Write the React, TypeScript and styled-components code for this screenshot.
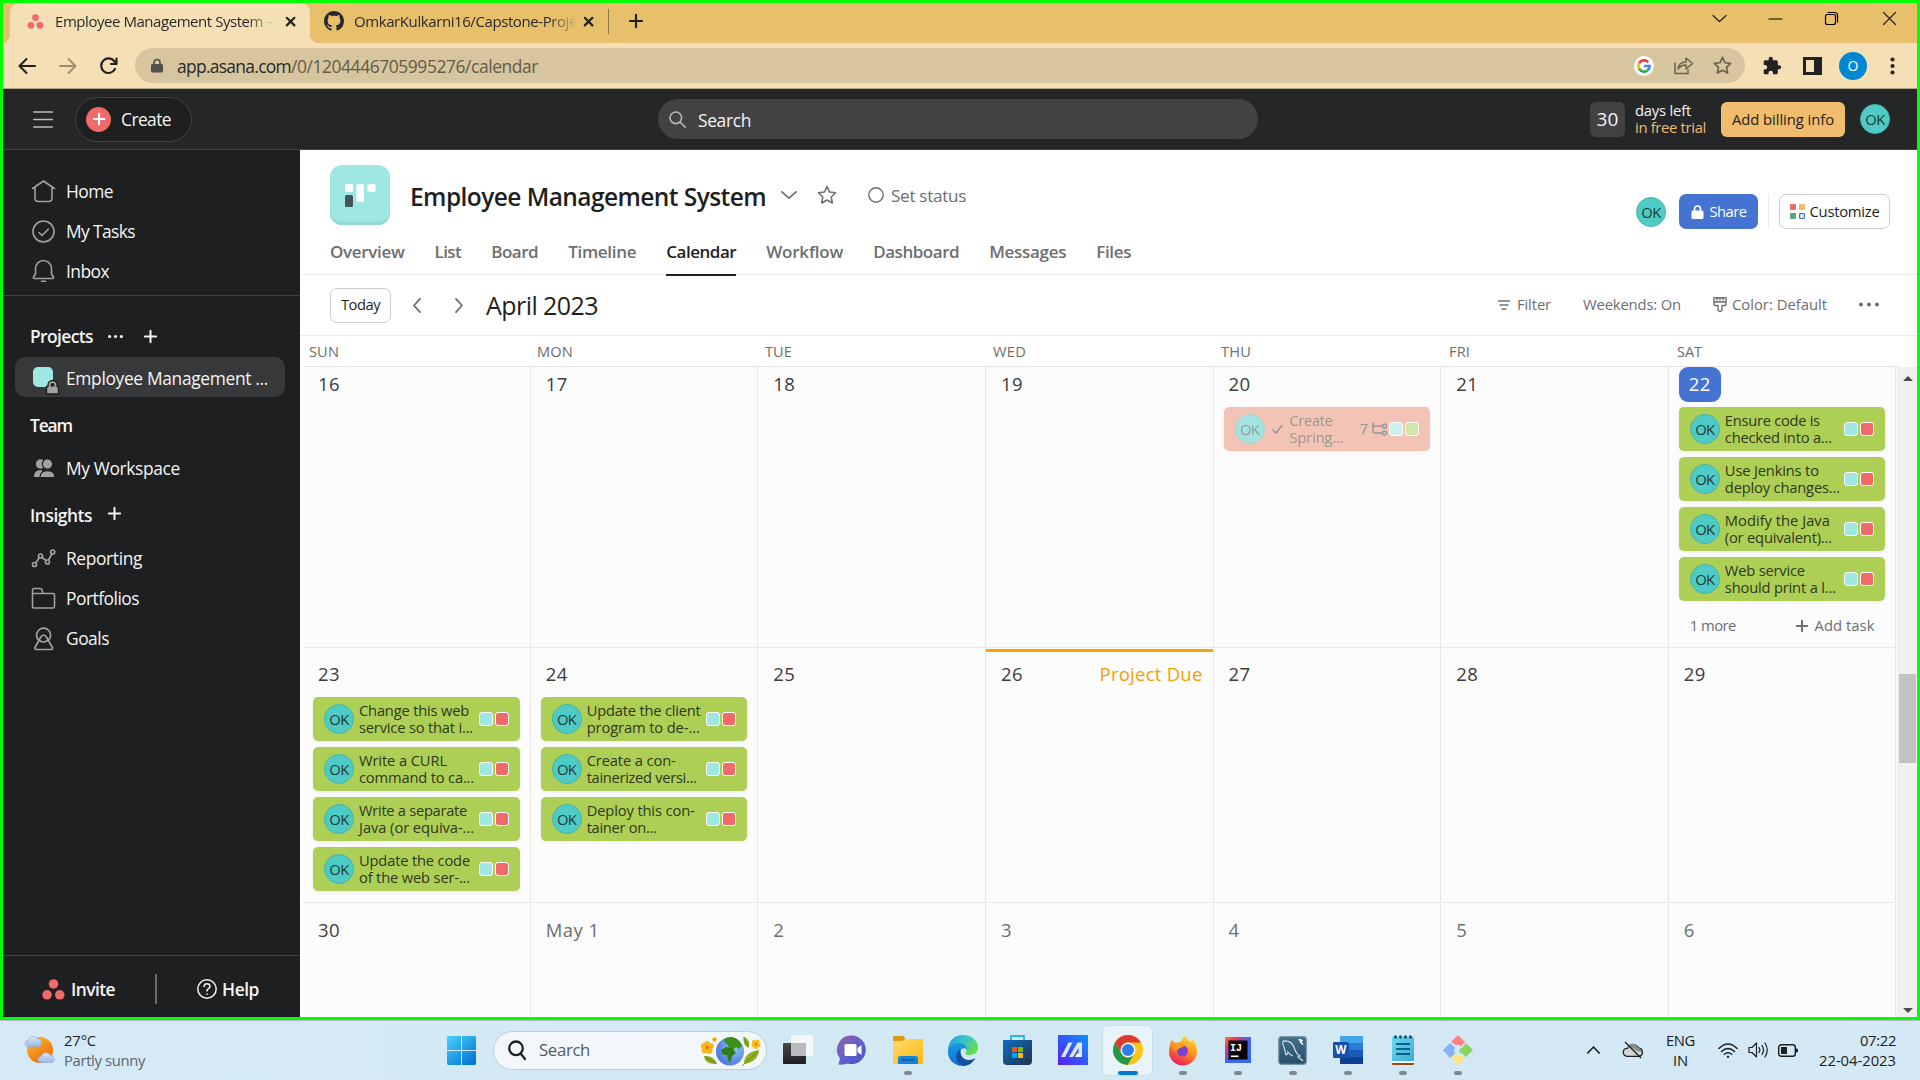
import React, { useLayoutEffect, useRef, useState } from "react";
import styled, { createGlobalStyle } from "styled-components";

const Global = createGlobalStyle`
  * { box-sizing: border-box; }
  body { margin: 0; overflow: hidden; background: #d3e8f4; font-family: "Open Sans", "Noto Sans", sans-serif; }
  svg { display: block; flex: none; overflow: visible; }
`;

const Line = styled.span<{ $size: number; $weight?: number; $color?: string; $lh?: number; $drop?: number }>`
  display: inline-block;
  flex: none;
  white-space: nowrap;
  font-size: ${(p) => p.$size}px;
  font-weight: ${(p) => p.$weight ?? 400};
  color: ${(p) => p.$color ?? "inherit"};
  line-height: ${(p) => (p.$lh ? `${p.$lh}px` : "1.3")};
  padding-top: ${(p) => p.$drop ?? 0}px;
`;

type TextProps = { children: string; size: number; w?: number; weight?: number; color?: string; lh?: number; drop?: number };

/* A single line of text, tracked so that it fills the measure `w`. */
function Text({ children, size, w, weight, color, lh, drop }: TextProps) {
  const ref = useRef<HTMLSpanElement>(null);
  const [track, setTrack] = useState(0);
  useLayoutEffect(() => {
    if (ref.current && w) {
      const natural = ref.current.getBoundingClientRect().width;
      setTrack((w - natural) / children.length);
    }
  }, []);
  return (
    <Line ref={ref} $size={size} $weight={weight} $color={color} $lh={lh} $drop={drop} style={{ letterSpacing: track }}>
      {children}
    </Line>
  );
}

const Screen = styled.div`
  width: 1920px; height: 1080px; display: flex; flex-direction: column; overflow: hidden;
`;
const BrowserWindow = styled.div`
  height: 1020px; border: 3px solid #00ff00; display: flex; flex-direction: column; background: #fff;
`;

/* ---------- browser chrome ---------- */
const TabStrip = styled.div`
  height: 40px; flex: none; background: #e8c06b; display: flex; align-items: stretch; padding-left: 7px;
`;
const BrowserTab = styled.div<{ $active?: boolean; $width: number; $pad: number }>`
  width: ${(p) => p.$width}px; padding-left: ${(p) => p.$pad}px; padding-bottom: 4px;
  background: ${(p) => (p.$active ? "#f5e0b6" : "transparent")};
  border-radius: 9px 9px 0 0; display: flex; align-items: center; position: relative; color: #2a2a2a;
  ${(p) => p.$active && `
    &::before, &::after { content: ""; position: absolute; bottom: 0; width: 9px; height: 9px; }
    &::before { left: -9px; background: radial-gradient(circle at 0 0, transparent 9px, #f5e0b6 9.5px); }
    &::after { right: -9px; background: radial-gradient(circle at 100% 0, transparent 9px, #f5e0b6 9.5px); }
  `}
`;
const TabTitle = styled.div<{ $width: number; $gap: number }>`
  width: ${(p) => p.$width}px; margin-left: ${(p) => p.$gap}px; overflow: hidden; white-space: nowrap;
  mask-image: linear-gradient(90deg, #000 88%, transparent 101%);
`;
const TabEnd = styled.div`
  display: flex; align-items: center; padding-bottom: 4px; gap: 20px;
  &::before { content: ""; width: 1px; height: 25px; background: #8d7748; }
`;
const WinControls = styled.div`
  margin-left: auto; width: 225px; display: grid; grid-template-columns: 54px 58px 55px 61px;
  justify-items: center; align-items: center; padding-bottom: 9px;
`;
const Toolbar = styled.div`
  height: 46px; flex: none; background: #f5e0b6; border-bottom: 1px solid #b3a684; display: flex; align-items: center;
  padding-left: 15px;
`;
const NavButtons = styled.div`display: flex; width: 117px; gap: 22.5px; align-items: center;`;
const Omnibox = styled.div`
  width: 1610px; height: 35px; border-radius: 18px; background: #d6c59f; display: flex; align-items: center; padding: 0 13px 0 16px;
`;
const UrlText = styled.div`margin-left: 14px; display: flex; color: #655b47;`;
const OmniActions = styled.div`margin-left: auto; display: flex; align-items: center; gap: 20px;`;
const BrowserActions = styled.div`display: flex; align-items: center; margin-left: 17px;`;
const ProfileDot = styled.div`
  width: 28px; height: 28px; border-radius: 50%; background: #0288d1; color: #fff; margin: 0 23px 0 17px;
  display: flex; align-items: center; justify-content: center; font-size: 14px;
`;

/* ---------- application top bar ---------- */
const TopBar = styled.header`
  height: 61px; flex: none; background: #252628; border-bottom: 1px solid #424244; display: flex; align-items: center; color: #f5f4f3;
`;
const TopLeft = styled.div`width: 655px; display: flex; align-items: center; padding-left: 30px;`;
const CreateButton = styled.button`
  margin-left: 22px; width: 117px; height: 45px; border-radius: 23px; border: 1px solid #424244; background: #1e1f21; color: #f5f4f3;
  display: flex; align-items: center; padding: 0 0 0 10px; gap: 10px; font-family: inherit;
`;
const PlusDisc = styled.span`
  width: 25px; height: 25px; border-radius: 50%; background: #f06a6a; display: flex; align-items: center; justify-content: center; flex: none;
`;
const SearchField = styled.div`
  width: 600px; height: 40px; border-radius: 20px; background: #424244; display: flex; align-items: center; gap: 12px; padding-left: 11px;
`;
const TopRight = styled.div`flex: 1; display: flex; align-items: center; padding-left: 332px;`;
const DaysBox = styled.div`
  width: 35px; height: 35px; border-radius: 6px; background: #424244; display: flex; align-items: center; justify-content: center; margin-right: 10px;
`;
const TrialText = styled.div`width: 86px; display: flex; flex-direction: column; align-items: flex-start;`;
const BillingButton = styled.button`
  width: 124px; height: 35px; border: 0; border-radius: 6px; background: #f1bd6c; color: #1e1f21; font-family: inherit; margin-right: 15px;
  display: flex; align-items: center; justify-content: center; padding: 0;
`;
const Avatar = styled.span`
  width: 30px; height: 30px; border-radius: 50%; background: #4ecbc4; border: 1px solid #45b3ac; color: #1e3c3b; flex: none;
  display: flex; align-items: center; justify-content: center; font-size: 14.8px; letter-spacing: -0.6px;
`;

/* ---------- sidebar ---------- */
const Body = styled.div`flex: 1; min-height: 0; display: flex;`;
const Sidebar = styled.nav`
  width: 297px; flex: none; background: #1e1f21; color: #f5f4f3; display: flex; flex-direction: column;
`;
const NavGroup = styled.div<{ $top?: number; $height: number; $line?: boolean }>`
  height: ${(p) => p.$height}px; padding-top: ${(p) => p.$top ?? 0}px;
  border-bottom: ${(p) => (p.$line ? "1px solid #424244" : "0")};
`;
const NavItem = styled.a<{ $selected?: boolean }>`
  height: 40px; margin: 0 15px 0 12px; border-radius: 10px; padding-left: 16px; display: flex; align-items: center; gap: 10px;
  background: ${(p) => (p.$selected ? "#37383a" : "transparent")}; color: #f5f4f3;
  > svg { width: 25px; height: 25px; }
`;
const SectionTitle = styled.div<{ $height: number }>`
  height: ${(p) => p.$height}px; padding-left: 27px; display: flex; align-items: center;
`;
const SectionIcons = styled.span<{ $left: number }>`display: flex; align-items: center; gap: 21px; margin-left: ${(p) => p.$left}px;`;
const SidebarFoot = styled.div`
  margin-top: auto; height: 62px; border-top: 1px solid #424244; display: flex; align-items: center; padding: 5px 0 0 39px;
`;
const FootItem = styled.div<{ $width: number; $gap: number }>`display: flex; align-items: center; gap: ${(p) => p.$gap}px; width: ${(p) => p.$width}px;`;
const FootRule = styled.div`width: 2px; height: 30px; background: #6a6b6d; margin-right: 40px;`;

/* ---------- project header ---------- */
const Main = styled.main`flex: 1; display: flex; flex-direction: column; background: #fff; min-width: 0; color: #1e1f21;`;
const ProjectHead = styled.div`height: 125px; flex: none; border-bottom: 1px solid #edeae9; display: flex; justify-content: space-between;`;
const ProjectTitleArea = styled.div`padding-left: 30px;`;
const TitleRow = styled.div`height: 75px; padding-top: 15px; display: flex; align-items: center;`;
const ProjectTile = styled.div`
  width: 60px; height: 60px; border-radius: 12px; background: #9ee7e3; box-shadow: inset 0 -3px 0 #93dad6; padding: 18px 15px; margin-right: 20px;
`;
const TitleExtras = styled.div`display: flex; align-items: center; margin-left: 15px;`;
const StatusPill = styled.div`display: flex; align-items: center; gap: 7px; margin-left: 31px; color: #6d6e6f;`;
const ViewTabs = styled.div`display: flex; height: 51px; position: relative;`;
const ViewTab = styled.a<{ $active?: boolean; $width: number }>`
  width: ${(p) => p.$width}px; height: 51px; margin-right: 30px; padding-top: 16px; display: block;
  color: ${(p) => (p.$active ? "#1e1f21" : "#6d6e6f")};
  border-bottom: ${(p) => (p.$active ? "2px solid #1e1f21" : "0")};
`;
const HeadActions = styled.div`height: 35px; margin-top: 44px; display: flex; align-items: center; padding-right: 27px;`;
const ShareButton = styled.button`
  width: 79px; height: 35px; border: 0; border-radius: 7px; background: #4573d2; color: #fff; margin: 0 10px 0 13px; padding: 0; font-family: inherit;
  display: flex; align-items: center; justify-content: center; gap: 6px;
`;
const ActionRule = styled.div`width: 1px; height: 35px; background: #edeae9; margin-right: 10px;`;
const OutlineButton = styled.button<{ $width: number }>`
  width: ${(p) => p.$width}px; height: 35px; border: 1px solid #cfcbcb; border-radius: 7px; background: #fff; color: #1e1f21; padding: 0; font-family: inherit;
  display: flex; align-items: center; justify-content: center; gap: 5px;
`;
const CalendarBar = styled.div`
  height: 61px; flex: none; border-bottom: 1px solid #edeae9; display: flex; align-items: center; padding: 0 38px 0 30px;
`;
const MonthArrows = styled.div`display: flex; width: 95px; padding-left: 22px; gap: 34px;`;
const BarTools = styled.div`margin-left: auto; display: flex; align-items: center; color: #6d6e6f;`;
const BarTool = styled.div<{ $gap: number; $after: number }>`display: flex; align-items: center; gap: ${(p) => p.$gap}px; margin-right: ${(p) => p.$after}px;`;

/* ---------- calendar ---------- */
const WeekdayRow = styled.div`
  height: 31px; flex: none; display: grid; grid-template-columns: repeat(7, 228px); margin: 0 18px 0 3px; align-items: center; color: #6d6e6f;
  border-bottom: 1px solid #e6e3e2; padding-bottom: 1px;
  > span { padding-left: 6px; }
`;
const CalendarArea = styled.div`flex: 1; min-height: 0; display: flex; padding-left: 3px;`;
const Weeks = styled.div`width: 1593.5px; background: #fcfcfc; display: flex; flex-direction: column; overflow: hidden;`;
const Week = styled.div<{ $height: number }>`
  height: ${(p) => p.$height}px; flex: none; display: grid; grid-template-columns: repeat(7, 1fr); border-bottom: 1px solid #eae7e6;
`;
const Day = styled.div<{ $top: number; $due?: boolean }>`
  border-right: 1px solid #e8e5e4; padding: ${(p) => p.$top}px 10px 0 10px; min-width: 0; display: flex; flex-direction: column;
  box-shadow: ${(p) => (p.$due ? "inset 0 3px 0 #fca401" : "none")}; margin-top: ${(p) => (p.$top ? 1 : 0)}px;
`;
const DayHead = styled.div`height: 35px; flex: none; display: flex; justify-content: space-between; align-items: center; padding-left: 5px; margin-bottom: 5px;`;
const TodayBadge = styled.div`
  width: 42px; height: 35px; border-radius: 9px; background: #4573d2; color: #fff; display: flex; align-items: center; justify-content: center; margin-left: -5px;
`;
const Card = styled.div<{ $done?: boolean }>`
  height: 44px; flex: none; margin-bottom: 6px; border-radius: 5px; display: flex; align-items: center; padding: 0 11px;
  background: ${(p) => (p.$done ? "#ec8d71" : "#aecf55")}; box-shadow: 0 1px 3px rgba(109, 110, 111, 0.12);
  opacity: ${(p) => (p.$done ? 0.5 : 1)};
`;
const CardText = styled.div<{ $gap?: number }>`
  margin-left: ${(p) => p.$gap ?? 5}px; display: flex; flex-direction: column; align-items: flex-start; color: #2f3920; flex: 1; min-width: 0; padding-bottom: 1px;
`;
const Swatches = styled.div<{ $gap?: number }>`display: flex; gap: 2px; margin-left: ${(p) => p.$gap ?? 0}px;`;
const Swatch = styled.i<{ $color: string }>`
  width: 14px; height: 14px; border-radius: 3px; border: 1px solid #fff; background: ${(p) => p.$color};
`;
const DayFoot = styled.div`display: flex; justify-content: space-between; padding: 9px 11px 0; color: #6d6e6f;`;
const AddTask = styled.span`display: flex; align-items: center; gap: 6px;`;
const ScrollTrack = styled.div`
  flex: 1; background: #f0f0f0; display: flex; flex-direction: column; align-items: center; padding: 9px 0 4px 2px;
`;
const ScrollThumb = styled.div`width: 17px; height: 89px; background: #c2c2c2; margin: 293px 0 auto;`;

/* ---------- taskbar ---------- */
const Taskbar = styled.footer`
  height: 60px; border-top: 1px solid #b5b8cc; background: linear-gradient(90deg, #d5eaf6, #d2e8f3 50%, #d4e8f5); display: flex; align-items: center; color: #1d1f21; padding-bottom: 1px;
`;
const Weather = styled.div`width: 447px; padding-left: 25px; display: flex; align-items: center; gap: 9px;`;
const TwoLines = styled.div<{ $align: string }>`display: flex; flex-direction: column; align-items: ${(p) => p.$align};`;
const TaskSearch = styled.div`
  width: 274px; height: 39px; margin: 0 3px 0 17px; border-radius: 20px; background: #f2f7fb; border: 1px solid #b9cfdd; display: flex; align-items: center; padding: 0 5px 0 14px; gap: 13px;
  > :last-child { margin-left: auto; }
`;
const AppSlot = styled.div<{ $active?: boolean }>`
  width: 49px; height: 49px; margin-right: 6px; border-radius: 5px; display: flex; align-items: center; justify-content: center; position: relative;
  background: ${(p) => (p.$active ? "#e9f3fa" : "transparent")}; box-shadow: ${(p) => (p.$active ? "0 0 0 1px #c9dde9" : "none")};
`;
const RunMark = styled.i<{ $active?: boolean }>`
  position: absolute; bottom: 0; left: 50%; width: ${(p) => (p.$active ? 20 : 8)}px; height: 4px; border-radius: 2px; transform: translateX(-50%);
  background: ${(p) => (p.$active ? "#0078d4" : "#7e8a91")};
`;
const Tray = styled.div`margin-left: auto; display: flex; align-items: center; padding-right: 24px;`;
const TrayGap = styled.span<{ $w: number }>`width: ${(p) => p.$w}px; flex: none;`;

/* ---------- icons ---------- */
const Stroke = ({ w, h, d, s = 1.5, c = "currentColor", vb }: { w: number; h: number; d: string; s?: number; c?: string; vb?: string }) => (
  <svg width={w} height={h} viewBox={vb ?? `0 0 ${w} ${h}`} fill="none" stroke={c} strokeWidth={s} strokeLinecap="round" strokeLinejoin="round"><path d={d} /></svg>
);
const AsanaMark = ({ w, h }: { w: number; h: number }) => (
  <svg width={w} height={h} viewBox="0 0 24 22" fill="#f06a6a"><circle cx="12" cy="5.2" r="5" /><circle cx="5.2" cy="16.6" r="5" /><circle cx="18.6" cy="16.6" r="5" /></svg>
);
const Plus = ({ n, s = 2, c = "currentColor" }: { n: number; s?: number; c?: string }) => <Stroke w={n} h={n} vb="0 0 12 12" s={s * 12 / n} c={c} d="M6 .8v10.4M.8 6h10.4" />;
const Cross = () => <Stroke w={9} h={9} s={2.2} c="#222" d="M.8.8l7.6 7.6M8.4.8L.8 8.4" />;
const STAR = "M10 1.5l2.6 5.6 6 .7-4.4 4.2 1.2 6L10 15l-5.4 3 1.2-6L1.4 7.8l6-.7z";
const Dots = ({ w, r, c }: { w: number; r: number; c: string }) => (
  <svg width={w} height={5} fill={c}><circle cx={r} cy="2.5" r={r} /><circle cx={w / 2} cy="2.5" r={r} /><circle cx={w - r} cy="2.5" r={r} /></svg>
);
const GithubMark = () => (
  <svg width="20" height="20" viewBox="0 0 16 16" fill="#24292f"><path d="M8 0C3.58 0 0 3.58 0 8c0 3.54 2.29 6.53 5.47 7.59.4.07.55-.17.55-.38 0-.19-.01-.82-.01-1.49-2.01.37-2.53-.49-2.69-.94-.09-.23-.48-.94-.82-1.13-.28-.15-.68-.52-.01-.53.63-.01 1.08.58 1.23.82.72 1.21 1.87.87 2.33.66.07-.52.28-.87.51-1.07-1.78-.2-3.64-.89-3.64-3.95 0-.87.31-1.59.82-2.15-.08-.2-.36-1.02.08-2.12 0 0 .67-.21 2.2.82.64-.18 1.32-.27 2-.27s1.36.09 2 .27c1.53-1.04 2.2-.82 2.2-.82.44 1.1.16 1.92.08 2.12.51.56.82 1.27.82 2.15 0 3.07-1.87 3.75-3.65 3.95.29.25.54.73.54 1.48 0 1.07-.01 1.93-.01 2.2 0 .21.15.46.55.38A8.01 8.01 0 0016 8c0-4.42-3.58-8-8-8z" /></svg>
);
const Lock = ({ w, h, c }: { w: number; h: number; c: string }) => (
  <svg width={w} height={h} viewBox="0 0 12 14"><rect x="0" y="5.5" width="12" height="8.5" rx="1.5" fill={c} /><path d="M3 6V4a3 3 0 016 0v2" fill="none" stroke={c} strokeWidth="1.7" /></svg>
);
const GoogleMark = () => (
  <svg width="20" height="20" viewBox="0 0 20 20" fill="none" strokeWidth="2.7"><circle cx="10" cy="10" r="10" fill="#fff" /><path d="M14.2 6.3A5.6 5.6 0 005.1 7.3" stroke="#ea4335" /><path d="M5.1 7.3a5.6 5.6 0 000 5.4" stroke="#fbbc05" /><path d="M5.1 12.7a5.6 5.6 0 008.4 1.7" stroke="#34a853" /><path d="M13.5 14.4A5.5 5.5 0 0015.600 10H10" stroke="#4285f4" /></svg>
);
const WeatherIcon = () => (
  <svg width="30" height="30" viewBox="0 0 30 30">
    <defs><linearGradient id="sun" x1="0" y1="0" x2=".7" y2="1"><stop offset="0" stopColor="#f7c02e" /><stop offset="1" stopColor="#f06a0c" /></linearGradient>
      <linearGradient id="cloud" x1="0" y1="0" x2="0" y2="1"><stop offset="0" stopColor="#dbe5f8" /><stop offset="1" stopColor="#9db8e8" /></linearGradient></defs>
    <circle cx="15" cy="15" r="13" fill="url(#sun)" />
    <path d="M3 11.500a3 3 0 010-6 5.500 5.500 0 0110-1.500 4 4 0 011.500 7.500z" fill="url(#cloud)" stroke="#8faae0" strokeWidth=".6" />
    <path d="M16 27.500a3 3 0 010-6 5.500 5.500 0 0110-1 3.600 3.600 0 011 7z" fill="url(#cloud)" stroke="#8faae0" strokeWidth=".6" />
  </svg>
);
const WindowsIcon = () => (
  <svg width="29" height="29" viewBox="0 0 29 29"><defs><linearGradient id="win" gradientUnits="userSpaceOnUse" x1="0" y1="0" x2="24" y2="29"><stop offset="0" stopColor="#4cd0fb" /><stop offset="1" stopColor="#0377d4" /></linearGradient></defs>
    <path d="M1 0h13v14H0V1zM15 0h13l1 1v13H15zM0 15h14v14H1l-1-1zM15 15h14v13l-1 1H15z" fill="url(#win)" /></svg>
);
const EarthDecor = () => (
  <svg width="60" height="31" viewBox="0 0 60 31">
    <defs><radialGradient id="sea" cx=".65" cy=".35" r=".8"><stop offset="0" stopColor="#8cc8f5" /><stop offset="1" stopColor="#4468d8" /></radialGradient></defs>
    <g fill="#fbb910"><circle cx="6" cy="9" r="2.900" /><circle cx="10" cy="11" r="2.900" /><circle cx="8.500" cy="16" r="2.900" /><circle cx="3.500" cy="15.500" r="2.900" /><circle cx="2.500" cy="11" r="2.700" /><circle cx="13.500" cy="4.500" r="2.300" /><circle cx="53" cy="7" r="2" /><circle cx="56.500" cy="6.500" r="2" /><circle cx="57.500" cy="10" r="2" /><circle cx="55" cy="12" r="2" /><circle cx="52.500" cy="10.500" r="2" /></g>
    <g fill="#ee7413"><circle cx="6" cy="12.500" r="2" /><circle cx="13.500" cy="4.500" r="1" /><circle cx="55" cy="9.200" r="1.300" /></g>
    <circle cx="29" cy="16.500" r="14" fill="url(#sea)" />
    <path d="M23 4q7-4 13 0 4 3 5 7l-3 3-3-2-3 3-3-1-3-5q-3-1-3-5z" fill="#3d8f17" />
    <path d="M20 15l5-3 6 1 4 5-4 3-1 5q-2 2-3-1l-1-5-5-1z" fill="#2f7d12" />
    <g fill="#8fb01e"><path d="M3 21q10-1 13 8-12 1-13-8zM42.500 1q8 5 5 12-6-3-5-12zM43 29q0-12 15-14-1 12-15 14z" /></g>
    <path d="M4 22l11 6M43 3l4 9M41 31l15-14" stroke="#57741a" strokeWidth=".8" fill="none" />
  </svg>
);
const appIcons: Record<string, React.ReactNode> = {
  taskview: <svg width="30" height="30" viewBox="0 0 30 30"><defs><linearGradient id="tv" x1="0" y1="0" x2="0" y2="1"><stop offset="0" stopColor="#474747" /><stop offset="1" stopColor="#1e1e1e" /></linearGradient></defs><rect x="0" y="8" width="23" height="21" rx="1" fill="url(#tv)" /><rect x="8" y="0" width="22" height="21" rx="1" fill="#f4f6f7" /><rect x="8" y="8" width="15" height="13" fill="#b9bbbc" /></svg>,
  chat: <svg width="29" height="30" viewBox="0 0 29 30"><defs><linearGradient id="chat" x1="0" y1="0" x2="1" y2="1"><stop offset="0" stopColor="#9563a6" /><stop offset=".6" stopColor="#5b5fd0" /><stop offset="1" stopColor="#4a4fc0" /></linearGradient></defs><path d="M14.500 .5a14.300 14.300 0 11-5 28q-4 1.500-9 1l1.500-6A14.300 14.300 0 0114.500 .5z" fill="url(#chat)" /><rect x="6.500" y="9" width="12" height="12" rx="1.500" fill="#fff" /><path d="M19.500 13l4-3v10l-4-3z" fill="#fff" /></svg>,
  folder: <svg width="30" height="28" viewBox="0 0 30 28"><defs><linearGradient id="fold" x1="0" y1="0" x2="1" y2="1"><stop offset="0" stopColor="#ffdb6b" /><stop offset="1" stopColor="#fbb713" /></linearGradient></defs><path d="M0 1q0-1 1-1h9l3 3h-1l-2 2H0z" fill="#dd9a10" /><path d="M0 5h10l2-2h17q1 0 1 1v24H0z" fill="url(#fold)" /><path d="M5 28v-5q0-3 3-3h14q3 0 3 3v5z" fill="#1583d6" /><path d="M9 24h12" stroke="#0b4f90" strokeWidth="1.300" /></svg>,
  edge: <svg width="30" height="31" viewBox="0 0 30 31"><defs><linearGradient id="edA" x1="0" y1="0" x2="1" y2=".6"><stop offset="0" stopColor="#1d93dd" /><stop offset=".45" stopColor="#35bfd8" /><stop offset="1" stopColor="#62df4e" /></linearGradient><linearGradient id="edB" x1="0" y1="0" x2="0" y2="1"><stop offset="0" stopColor="#1b98e2" /><stop offset="1" stopColor="#0e72cf" /></linearGradient></defs><path d="M0 14C1 5 7 0 15 0c9 0 15 6 15 12.500 0 5-4 7.500-8.500 7.500-3 0-5-1-4-2.500 3-4-1-8-6.500-8C5.500 9.500 1.500 11 0 14z" fill="url(#edA)" /><path d="M0 15c1-5 7-7.500 12-7 5 .5 7.500 4 7 7.500-1-3-6-3-6.500 1C12 24 20 28 27.500 23 24 29 19 31 15 31 6 31-1 24 0 15z" fill="url(#edB)" /><path d="M12.500 14.500c-1 6 3 11 9 10.500 3 0 5-1 6-2-3 5-7 7.500-11 7.500-9-1-11-12-4-16z" fill="#12519d" /></svg>,
  store: <svg width="30" height="30" viewBox="0 0 30 30"><defs><linearGradient id="sto" x1="0" y1="0" x2="1" y2="1"><stop offset="0" stopColor="#0a6ebf" /><stop offset="1" stopColor="#25324f" /></linearGradient></defs><path d="M8 6V1h13v5" stroke="#22b7ee" strokeWidth="1.800" fill="none" /><path d="M0 5h29v21q0 4-4 4H4q-4 0-4-4z" fill="url(#sto)" /><path d="M9 12h5v5H9z" fill="#f35325" /><path d="M15 12h5v5h-5z" fill="#81bc06" /><path d="M9 18h5v5H9z" fill="#05a6f0" /><path d="M15 18h5v5h-5z" fill="#ffba08" /></svg>,
  asus: <svg width="30" height="30" viewBox="0 0 30 30"><defs><linearGradient id="asu" x1="0" y1="1" x2="1" y2="0"><stop offset="0" stopColor="#5b1df5" /><stop offset="1" stopColor="#0b93ff" /></linearGradient></defs><rect width="30" height="30" fill="url(#asu)" /><path d="M3 22L10.500 7.500h4L7 22zM11 22l8.500-14.500H24V22h-3.500v-9L15 22z" fill="#dfe6ff" /><path d="M17 22l2-3.500h3V22z" fill="#fff" /></svg>,
  chrome: <svg width="30" height="30" viewBox="0 0 30 30"><circle cx="15" cy="15" r="15" fill="#fcc419" /><path d="M2 7.500A15 15 0 0128 7.500H15l-6.500 11z" fill="#de3a2c" /><path d="M2 7.500A15 15 0 0014.500 30l7-11.500H8.500z" fill="#239649" /><circle cx="15" cy="15" r="7.500" fill="#fff" /><circle cx="15" cy="15" r="6" fill="#2b7de9" /></svg>,
  firefox: <svg width="29" height="29" viewBox="0 0 29 29"><defs><linearGradient id="ff" x1=".8" y1="0" x2=".3" y2="1"><stop offset="0" stopColor="#ffe23c" /><stop offset=".5" stopColor="#ff8a1c" /><stop offset="1" stopColor="#ee1561" /></linearGradient></defs><path d="M2 9q0-3 2-5l3 3 5-1 2-1q0-4 4-5 1 4 5 6l0 0q1-1 1-3 5 5 5 12a14 14 0 11-28 1q0-4 1-7z" fill="url(#ff)" /><circle cx="14.500" cy="15" r="5.500" fill="#7a40d2" /><path d="M3 9q4-2 7 0 4-1 6 2-3 0-4 1-3 1-4 4-3-3-5-7z" fill="#ff9a22" /></svg>,
  idea: <svg width="26" height="26" viewBox="0 0 26 26"><defs><linearGradient id="ij" x1="0" y1="0" x2="1" y2="1"><stop offset="0" stopColor="#ff7a22" /><stop offset=".25" stopColor="#e8356f" /><stop offset=".5" stopColor="#4b63e8" /><stop offset="1" stopColor="#2b6df2" /></linearGradient></defs><rect width="26" height="26" fill="url(#ij)" /><rect x="3.500" y="3.500" width="19" height="19" fill="#0a0208" /><path d="M6 18.500h7.500v1.600H6z" fill="#fff" /><text x="5" y="13.500" fontFamily="Liberation Mono" fontWeight="bold" fontSize="10" fill="#fff">IJ</text></svg>,
  mysql: <svg width="29" height="29" viewBox="0 0 29 29"><defs><linearGradient id="my" x1="0" y1="0" x2="0" y2="1"><stop offset="0" stopColor="#45708a" /><stop offset="1" stopColor="#234f68" /></linearGradient></defs><rect x=".7" y=".7" width="27.600" height="27.600" rx="3" fill="url(#my)" stroke="#7794a3" strokeWidth="1.300" /><path d="M5 5q8-1 11 6 2 7 6 9l-2 1q3 2 5 4M5 5q-1 3 1 6 1 4 2 8 2-1 2-3 2 3 5 4" fill="none" stroke="#dbe6ec" strokeWidth="1.100" /><path d="M20.500 3.500l2 .5v2l2.500 2.500M22.500 6l2-2" stroke="#fff" strokeWidth="1.700" fill="none" /></svg>,
  word: <svg width="30" height="28" viewBox="0 0 30 28"><rect x="7" y="0" width="23" height="7" fill="#41a5ee" /><path d="M7 7h23v7H7z" fill="#2b7cd3" /><path d="M7 14h23v7H7z" fill="#185abd" /><path d="M7 21h23v7H7z" fill="#103f91" /><rect x="0" y="6" width="16" height="16" rx="1.300" fill="#1651a8" /><text x="2.300" y="18" fontFamily="Open Sans" fontWeight="bold" fontSize="11.500" fill="#fff">W</text></svg>,
  notepad: <svg width="22" height="30" viewBox="0 0 22 30"><defs><linearGradient id="np" x1="0" y1="0" x2="1" y2="1"><stop offset="0" stopColor="#6fd8f2" /><stop offset="1" stopColor="#3fabd0" /></linearGradient></defs><rect y="26" width="22" height="4" rx="1" fill="#984b0c" /><rect y="25" width="22" height="3" fill="#eef5f8" /><rect y="2" width="22" height="24" rx="1" fill="url(#np)" /><path d="M4 9h14M4 14h14M4 19h14" stroke="#0b5f86" strokeWidth="1.800" /><g fill="#0b5f86"><circle cx="3.500" cy="2" r="1.700" /><circle cx="8.500" cy="2" r="1.700" /><circle cx="13.500" cy="2" r="1.700" /><circle cx="18.500" cy="2" r="1.700" /></g></svg>,
  git: <svg width="30" height="30" viewBox="0 0 30 30"><path d="M15 0l7 7-4.500 4.500q-1-3-4-1L8 7z" fill="#ff8080" /><path d="M7 8l5.500 5q-3 2-.5 5.500L7 23l-7-8z" fill="#80b3ff" /><path d="M23 8l7 7-7 7-4.500-4q-2 1-2.500-2 1-3 3-3z" fill="#87d45f" /><path d="M15 30l-7-7 5-4.500q1 3 4 1l5 3.500z" fill="#ffe680" /></svg>,
};

/* ---------- data ---------- */
type Task = { lines: [string, number][] };
const saturday: Task[] = [
  { lines: [["Ensure code is", 95], ["checked into a...", 107]] },
  { lines: [["Use Jenkins to", 94], ["deploy changes...", 115]] },
  { lines: [["Modify the Java", 105], ["(or equivalent)...", 107]] },
  { lines: [["Web service", 80], ["should print a l...", 111]] },
];
const sunday: Task[] = [
  { lines: [["Change this web", 110], ["service so that i...", 114]] },
  { lines: [["Write a CURL", 88], ["command to ca...", 115]] },
  { lines: [["Write a separate", 108], ["Java (or equiva-...", 115]] },
  { lines: [["Update the code", 111], ["of the web ser-...", 111]] },
];
const monday: Task[] = [
  { lines: [["Update the client", 114], ["program to de-...", 113]] },
  { lines: [["Create a con-", 89], ["tainerized versi...", 110]] },
  { lines: [["Deploy this con-", 108], ["tainer on...", 70]] },
];
const viewTabs: [string, number][] = [["Overview", 74.5], ["List", 26.7], ["Board", 47], ["Timeline", 68], ["Calendar", 70], ["Workflow", 77], ["Dashboard", 86], ["Messages", 77], ["Files", 35]];
const weekdays: [string, number][] = [["SUN", 30], ["MON", 36], ["TUE", 27], ["WED", 33], ["THU", 30], ["FRI", 21], ["SAT", 25]];

const GREY = "#a2a0a2";
const navIcons = {
  home: <Stroke w={25} h={25} c={GREY} s={1.6} d="M1.500 9.500L12.500 2l11 7.500M4 8.500V19q0 3.500 3.500 3.500h10Q21 22.500 21 19V8.500" />,
  tasks: <Stroke w={25} h={25} c={GREY} s={1.6} d="M12.500 2a10.500 10.500 0 110 21 10.500 10.500 0 010-21M8 13.500l3 3 6.500-6.500" />,
  inbox: <Stroke w={25} h={25} c={GREY} s={1.6} d="M4.500 15V9.500a8 8 0 0116 0V15l2 3q.5 1.500-1 1.500h-18q-1.500 0-1-1.500zM10.500 22.300h4" />,
  people: <svg width="25" height="25" fill={GREY}><circle cx="9.500" cy="8" r="4.700" /><path d="M3 21q0-7 6.500-7 3 0 3 7z" /><circle cx="16.500" cy="8" r="5.200" stroke="#1e1f21" strokeWidth="1.200" /><path d="M9 21.600q0-7 7.500-7t7.200 7z" stroke="#1e1f21" strokeWidth="1.200" /></svg>,
  report: <Stroke w={25} h={25} c={GREY} s={1.7} d="M3.500 18.500m-2 0a2 2 0 104 0 2 2 0 10-4 0M9.500 10m-2 0a2 2 0 104 0 2 2 0 10-4 0M16.500 16m-2 0a2 2 0 104 0 2 2 0 10-4 0M21.700 6m-2 0a2 2 0 104 0 2 2 0 10-4 0M4.800 16.800l3.500-5M11 11.500l4 3M17.500 14l3.300-6" />,
  folder: <Stroke w={25} h={25} c={GREY} s={1.600} d="M1.500 7.500V4Q1.500 2.500 3 2.500h6.500q1 0 1.500 1.500l1 3.500H22q1.500 0 1.500 1.500v11.500Q23.500 22 22 22H3q-1.500 0-1.500-1.500zH12" />,
  goal: <Stroke w={25} h={25} c={GREY} s={1.700} d="M8 14.500a7 7 0 119.500-.3M4 21.500l5.500-10q3-5 6.200 0l5.700 10q.5 2-1.400 2H5.500q-2 0-1.500-2M8.500 14.500q4 3 8 0" />,
};

function TaskCard({ task }: { task: Task }) {
  return (
    <Card>
      <Avatar>OK</Avatar>
      <CardText>{task.lines.map(([t, w]) => <Text key={t} size={14.7} lh={17} w={w}>{t}</Text>)}</CardText>
      <Swatches><Swatch $color="#9ee7e3" /><Swatch $color="#f06a6a" /></Swatches>
    </Card>
  );
}

const DayNumber = ({ children, muted }: { children: string; muted?: boolean }) => (
  <Text size={18.5} w={children.length > 2 ? 54 : children.length * 11} color={muted ? "#6d6e6f" : "#3b3c3e"}>{children}</Text>
);

export default function App() {
  return (
    <Screen>
      <Global />
      <BrowserWindow>
        <TabStrip>
          <BrowserTab $active $width={300} $pad={17}>
            <AsanaMark w={17} h={15} />
            <TabTitle $width={218} $gap={11}><Text size={15} w={208}>Employee Management System</Text> -</TabTitle>
            <TrayGap $w={13} /><Cross />
          </BrowserTab>
          <BrowserTab $width={298} $pad={14}>
            <GithubMark />
            <TabTitle $width={221} $gap={10}><Text size={15} w={223}>OmkarKulkarni16/Capstone-Proje</Text></TabTitle>
            <TrayGap $w={9} /><Cross />
          </BrowserTab>
          <TabEnd><Plus n={14} s={2.2} c="#222" /></TabEnd>
          <WinControls>
            <Stroke w={13} h={7} s={1.2} c="#222" d="M0 .5l6.500 6 6.500-6" />
            <Stroke w={13} h={2} s={1.2} c="#000" d="M0 1h13" />
            <Stroke w={13} h={13} s={1.2} c="#000" d="M.5 4.500Q.5 2.500 2.500 2.500h6q2 0 2 2v6q0 2-2 2h-6q-2 0-2-2zM3 .5h6.500q3 0 3 3V10" />
            <Stroke w={13} h={13} s={1.2} c="#222" d="M.5.5l12 12M12.500.5l-12 12" />
          </WinControls>
        </TabStrip>
        <Toolbar>
          <NavButtons>
            <Stroke w={18} h={16} s={2.1} c="#222" d="M17 8H1.500M8.500 1l-7 7 7 7" />
            <Stroke w={18} h={16} s={2} c="#9d9072" d="M1 8h15.500M9.500 1l7 7-7 7" />
            <Stroke w={18} h={18} s={2.2} c="#222" d="M16 12A7.300 7.300 0 1115.500 4.500L17.500 7V1.500M17.500 7h-5.500" />
          </NavButtons>
          <Omnibox>
            <Lock w={12} h={15} c="#50504e" />
            <UrlText><Text size={17.4} w={114} drop={1} color="#292929">app.asana.com</Text><Text size={17.4} w={247} drop={1}>/0/1204446705995276/calendar</Text></UrlText>
            <OmniActions>
              <GoogleMark />
              <Stroke w={19} h={18} s={1.5} c="#6b624e" d="M1 6v10.500h13V13M4 12q1-7 8-7V1l6.500 5.500L12 12V8q-5 0-8 4z" />
              <Stroke w={19} h={19} vb="0 0 20 20" s={1.8} c="#6b624e" d={STAR} />
            </OmniActions>
          </Omnibox>
          <BrowserActions>
            <svg width="20" height="20" viewBox="0 0 24 24" fill="#222"><path d="M20.500 11H19V7a2 2 0 00-2-2h-4V3.500a2.500 2.500 0 00-5 0V5H4a2 2 0 00-2 2v3.800h1.500a2.700 2.700 0 010 5.400H2V20a2 2 0 002 2h3.800v-1.500a2.700 2.700 0 015.400 0V22H17a2 2 0 002-2v-4h1.500a2.500 2.500 0 000-5z" /></svg>
            <TrayGap $w={21} />
            <svg width="19" height="18"><path d="M0 0h19v18H0zM3 3v12h8V3z" fill="#222" fillRule="evenodd" /></svg>
            <ProfileDot>O</ProfileDot>
            <svg width="5" height="18" fill="#222"><circle cx="2.500" cy="2.500" r="2.100" /><circle cx="2.500" cy="9" r="2.100" /><circle cx="2.500" cy="15.500" r="2.100" /></svg>
          </BrowserActions>
        </Toolbar>

        <TopBar>
          <TopLeft>
            <Stroke w={20} h={17} s={1.6} c="#bcbcbd" d="M.8 1h18.500M.8 8.500h18.500M.8 16h18.500" />
            <CreateButton><PlusDisc><Plus n={12} s={2.2} c="#fff" /></PlusDisc><Text size={17.4} w={50} drop={1}>Create</Text></CreateButton>
          </TopLeft>
          <SearchField>
            <Stroke w={17} h={17} s={1.6} c="#b9b9ba" d="M6.800 1a5.800 5.800 0 110 11.600A5.800 5.800 0 016.800 1M11 11l5.300 5.300" />
            <Text size={17.4} w={53} drop={2}>Search</Text>
          </SearchField>
          <TopRight>
            <DaysBox><Text size={19} w={22} weight={500} drop={1}>30</Text></DaysBox>
            <TrialText><Text size={14.8} w={56} lh={17}>days left</Text><Text size={14.8} w={71} lh={17} color="#f1bd6c">in free trial</Text></TrialText>
            <BillingButton><Text size={14.8} w={102} drop={1}>Add billing info</Text></BillingButton>
            <Avatar>OK</Avatar>
          </TopRight>
        </TopBar>

        <Body>
          <Sidebar>
            <NavGroup $height={146} $top={21} $line>
              <NavItem>{navIcons.home}<Text size={17.4} w={47}>Home</Text></NavItem>
              <NavItem>{navIcons.tasks}<Text size={17.4} w={69}>My Tasks</Text></NavItem>
              <NavItem>{navIcons.inbox}<Text size={17.4} w={43}>Inbox</Text></NavItem>
            </NavGroup>
            <NavGroup $height={152} $top={20}>
              <SectionTitle $height={41}><Text size={17.4} weight={600} w={63}>Projects</Text><SectionIcons $left={15}><Dots w={15} r={1.6} c="#f5f4f3" /><Plus n={13} /></SectionIcons></SectionTitle>
              <NavItem $selected>
                <svg width="25" height="25"><rect x="2" y="2" width="20" height="20" rx="5" fill="#9ee7e3" /><path d="M17 21.500V20a4.500 4.500 0 019 0v1.500h1.500V29h-12v-7.500z" fill={GREY} stroke="#1e1f21" strokeWidth="1.300" /><path d="M19.500 21.500V20a2 2 0 014 0v1.500z" fill="#1e1f21" /></svg>
                <Text size={17.4} w={202} drop={3}>Employee Management ...</Text>
              </NavItem>
              <SectionTitle $height={56}><Text size={17.4} weight={600} w={42} drop={1}>Team</Text></SectionTitle>
            </NavGroup>
            <NavGroup $height={240}>
              <NavItem>{navIcons.people}<Text size={17.4} w={114} drop={1}>My Workspace</Text></NavItem>
              <SectionTitle $height={50}><Text size={17.4} weight={600} w={62} drop={4}>Insights</Text><SectionIcons $left={16}><Plus n={13} /></SectionIcons></SectionTitle>
              <NavItem>{navIcons.report}<Text size={17.4} w={76} drop={1}>Reporting</Text></NavItem>
              <NavItem>{navIcons.folder}<Text size={17.4} w={73} drop={1}>Portfolios</Text></NavItem>
              <NavItem>{navIcons.goal}<Text size={17.4} w={43} drop={1}>Goals</Text></NavItem>
            </NavGroup>
            <SidebarFoot>
              <FootItem $width={113} $gap={6}><AsanaMark w={23} h={21} /><Text size={17.4} weight={600} w={44} drop={1}>Invite</Text></FootItem>
              <FootRule />
              <FootItem $width={80} $gap={5}>
                <Stroke w={20} h={20} s={1.500} c="#f5f4f3" d="M10 .8a9.200 9.200 0 110 18.400A9.200 9.200 0 0110 .8M7 7.500q.3-2.700 3-2.700t3 2.500q0 1.500-1.500 2.400T10 12M10 15v.2" />
                <Text size={17.4} weight={600} w={37} drop={1}>Help</Text>
              </FootItem>
            </SidebarFoot>
          </Sidebar>

          <Main>
            <ProjectHead>
              <ProjectTitleArea>
                <TitleRow>
                  <ProjectTile><svg width="31" height="26"><rect x="0" y="1" width="8" height="8" rx="1.500" fill="#fff" /><rect x="11.500" y="1" width="7.500" height="18" rx="1.500" fill="#fff" /><rect x="22.500" y="1" width="8" height="8" rx="1.500" fill="#fff" /><rect x="0" y="12" width="8" height="12" rx="1.500" fill="#3f5556" /></svg></ProjectTile>
                  <Text size={24.5} weight={600} w={356} drop={3}>Employee Management System</Text>
                  <TitleExtras>
                    <Stroke w={16} h={8} s={1.700} c="#6d6e6f" d="M.8.800l7.200 6.400L15.200.8" />
                    <TrayGap $w={20} />
                    <Stroke w={20} h={20} s={1.500} c="#6d6e6f" d={STAR} />
                  </TitleExtras>
                  <StatusPill><Stroke w={16} h={16} s={1.400} d="M8 .8a7.200 7.200 0 110 14.400A7.200 7.200 0 018 .8" /><Text size={17.200} w={75} drop={3}>Set status</Text></StatusPill>
                </TitleRow>
                <ViewTabs>
                  {viewTabs.map(([t, w]) => <ViewTab key={t} $width={w} $active={t === "Calendar"}><Text size={17} weight={600} w={w}>{t}</Text></ViewTab>)}
                </ViewTabs>
              </ProjectTitleArea>
              <HeadActions>
                <Avatar>OK</Avatar>
                <ShareButton><Lock w={13} h={14} c="#fff" /><Text size={14.800} weight={500} w={37}>Share</Text></ShareButton>
                <ActionRule />
                <OutlineButton $width={111}>
                  <svg width="15" height="15"><rect width="6" height="6" rx="1" fill="#f06a6a" /><rect x="9" width="6" height="6" rx="1" fill="#f1bd6c" /><rect y="9" width="6" height="6" rx="1" fill="#5da283" /><rect x="9.600" y="9.600" width="4.800" height="4.800" rx=".5" fill="#fff" stroke="#4573d2" strokeWidth="1.200" /></svg>
                  <Text size={14.800} w={70}>Customize</Text>
                </OutlineButton>
              </HeadActions>
            </ProjectHead>
            <CalendarBar>
              <OutlineButton $width={61}><Text size={14.800} w={39}>Today</Text></OutlineButton>
              <MonthArrows>
                <Stroke w={8} h={15} s={1.800} c="#6d6e6f" d="M7 .8L1 7.500l6 6.700" />
                <Stroke w={8} h={15} s={1.800} c="#6d6e6f" d="M1 .8l6 6.700-6 6.700" />
              </MonthArrows>
              <Text size={25} w={112} drop={1}>April 2023</Text>
              <BarTools>
                <BarTool $gap={7} $after={32}><Stroke w={12} h={10} s={1.400} d="M.5 1h11M2 5h8M4 9h4" /><Text size={14.800} weight={500} w={34}>Filter</Text></BarTool>
                <BarTool $gap={0} $after={32}><Text size={14.800} weight={500} w={98}>Weekends: On</Text></BarTool>
                <BarTool $gap={5} $after={32}><Stroke w={14} h={15} s={1.400} d="M1 .8h12v6.700q0 1-1 1H9V13q-2 3-4 0V8.500H2q-1 0-1-1zM1 5h12M4 1v2M7 1v2M10 1v2" /><Text size={14.800} weight={500} w={95}>Color: Default</Text></BarTool>
                <Dots w={20} r={2} c="#6d6e6f" />
              </BarTools>
            </CalendarBar>
            <WeekdayRow>{weekdays.map(([d, w]) => <span key={d}><Text size={14.600} weight={500} w={w}>{d}</Text></span>)}</WeekdayRow>
            <CalendarArea>
              <Weeks>
                <Week $height={281}>
                  {["16", "17", "18", "19"].map((d) => <Day key={d} $top={0}><DayHead><DayNumber>{d}</DayNumber></DayHead></Day>)}
                  <Day $top={0}>
                    <DayHead><DayNumber>20</DayNumber></DayHead>
                    <Card $done>
                      <Avatar>OK</Avatar>
                      <TrayGap $w={7} />
                      <Stroke w={11} h={9} s={1.600} c="#333" d="M.8 5l3 3L10 .8" />
                      <CardText $gap={7}><Text size={14.700} lh={17} w={43}>Create</Text><Text size={14.700} lh={17} w={54}>Spring...</Text></CardText>
                      <Text size={15} color="#333">7</Text><TrayGap $w={4} />
                      <Stroke w={16} h={14} s={1.500} c="#333" d="M1 1v8q0 2 2 2h7.500M1 4h9.500M12.500 4m-2 0a2 2 0 104 0 2 2 0 10-4 0M12.500 11m-2 0a2 2 0 104 0 2 2 0 10-4 0" />
                      <Swatches $gap={1}><Swatch $color="#9ee7e3" /><Swatch $color="#aecf55" /></Swatches>
                    </Card>
                  </Day>
                  <Day $top={0}><DayHead><DayNumber>21</DayNumber></DayHead></Day>
                  <Day $top={0}>
                    <DayHead><TodayBadge><Text size={18.500} w={22} weight={500}>22</Text></TodayBadge></DayHead>
                    {saturday.map((t) => <TaskCard key={t.lines[0][0]} task={t} />)}
                    <DayFoot><Text size={14.800} weight={500} w={46}>1 more</Text><AddTask><Plus n={12} s={2} /><Text size={14.800} weight={500} w={60}>Add task</Text></AddTask></DayFoot>
                  </Day>
                </Week>
                <Week $height={255}>
                  <Day $top={8}><DayHead><DayNumber>23</DayNumber></DayHead>{sunday.map((t) => <TaskCard key={t.lines[0][0]} task={t} />)}</Day>
                  <Day $top={8}><DayHead><DayNumber>24</DayNumber></DayHead>{monday.map((t) => <TaskCard key={t.lines[0][0]} task={t} />)}</Day>
                  <Day $top={8}><DayHead><DayNumber>25</DayNumber></DayHead></Day>
                  <Day $top={8} $due><DayHead><DayNumber>26</DayNumber><Text size={18.500} w={103} color="#f2a100">Project Due</Text></DayHead></Day>
                  {["27", "28", "29"].map((d) => <Day key={d} $top={8}><DayHead><DayNumber>{d}</DayNumber></DayHead></Day>)}
                </Week>
                <Week $height={130}>
                  <Day $top={9}><DayHead><DayNumber>30</DayNumber></DayHead></Day>
                  {["May 1", "2", "3", "4", "5", "6"].map((d) => <Day key={d} $top={9}><DayHead><DayNumber muted>{d}</DayNumber></DayHead></Day>)}
                </Week>
              </Weeks>
              <ScrollTrack>
                <svg width="10" height="5" fill="#4a4a4a"><path d="M5 0l5 5H0z" /></svg>
                <ScrollThumb />
                <svg width="10" height="5" fill="#4a4a4a"><path d="M5 5l5-5H0z" /></svg>
              </ScrollTrack>
            </CalendarArea>
          </Main>
        </Body>
      </BrowserWindow>

      <Taskbar>
        <Weather>
          <WeatherIcon />
          <TwoLines $align="flex-start"><Text size={14.800} lh={20} w={32}>27°C</Text><Text size={14.800} lh={20} w={81} color="#5b656b">Partly sunny</Text></TwoLines>
        </Weather>
        <WindowsIcon />
        <TaskSearch>
          <Stroke w={18} h={20} s={2.300} c="#222" d="M8 1.500a6.800 6.800 0 110 13.600A6.800 6.800 0 018 1.500M13 14l4 5" />
          <Text size={16.800} w={51} color="#555b60">Search</Text>
          <EarthDecor />
        </TaskSearch>
        <TrayGap $w={3} />
        {Object.keys(appIcons).map((name, i) => (
          <AppSlot key={name} $active={name === "chrome"}>
            {appIcons[name]}
            {(i === 2 || i > 5) && <RunMark $active={name === "chrome"} />}
          </AppSlot>
        ))}
        <Tray>
          <Stroke w={13} h={8} s={1.700} c="#222" d="M.8 7l5.700-6 5.700 6" />
          <TrayGap $w={23} />
          <svg width="20" height="16" viewBox="0 0 20 16" fill="none" stroke="#1d1f21" strokeWidth="1.300"><path d="M4 14.300a4 4 0 01.5-8A6 6 0 0115.500 6a4.200 4.200 0 01.5 8.300z" fill="#d3d5d6" /><path d="M5 6q5-1 9 3l4 1q1-4-3-4Q13 1 9 1.500T5 6z" fill="#8b8d8e" stroke="none" /><path d="M2 0l16 16" strokeWidth="1.500" /></svg>
          <TrayGap $w={23} />
          <TwoLines $align="center"><Text size={14.800} lh={20} w={29}>ENG</Text><Text size={14.800} lh={20} w={15}>IN</Text></TwoLines>
          <TrayGap $w={23} />
          <Stroke w={20} h={15} s={1.400} c="#1d1f21" d="M.8 5.500q9.200-9 18.400 0M3.500 8.500q6.500-6 13 0M6.300 11.300q3.700-3 7.400 0M9.500 13.500h1v.5h-1z" />
          <TrayGap $w={10} />
          <Stroke w={20} h={16} s={1.200} c="#1d1f21" d="M1 5.500h3L8.500 1v14L4 10.500H1zM11 5.500q1.800 2.500 0 5M14 3.500q3 4.500 0 9M17 1q4.500 7 0 14" />
          <TrayGap $w={10} />
          <svg width="20" height="13"><rect x=".7" y=".7" width="16.600" height="11.600" rx="2.500" fill="none" stroke="#1d1f21" strokeWidth="1.400" /><rect x="3" y="3" width="6" height="7" fill="#1d1f21" /><path d="M18 4.500h1q1 0 1 2t-1 2h-1z" fill="#1d1f21" /></svg>
          <TrayGap $w={21} />
          <TwoLines $align="flex-end"><Text size={14.800} lh={20} w={36}>07:22</Text><Text size={14.800} lh={20} w={77}>22-04-2023</Text></TwoLines>
        </Tray>
      </Taskbar>
    </Screen>
  );
}
